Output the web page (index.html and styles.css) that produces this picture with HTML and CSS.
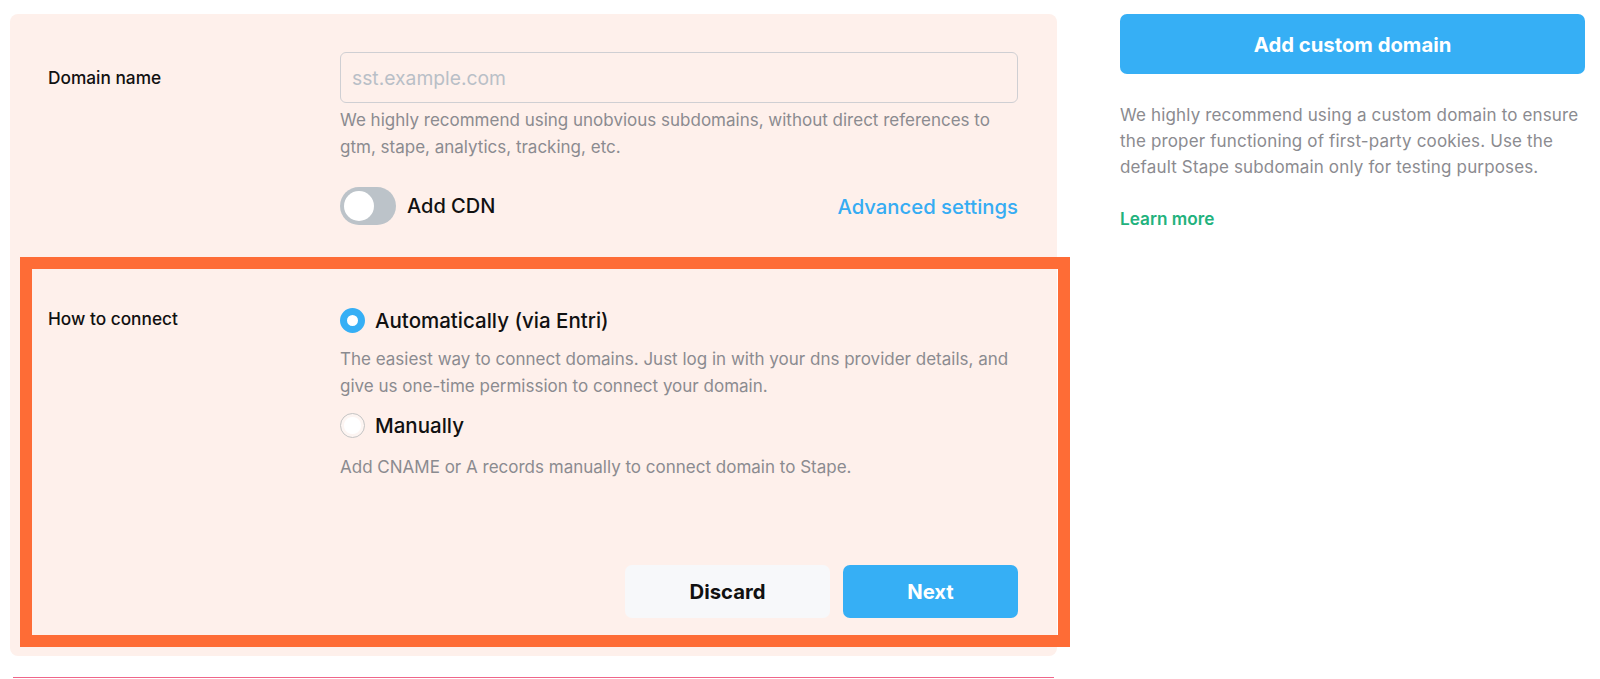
FILE: index.html
```html
<!DOCTYPE html>
<html lang="en">
<head>
<meta charset="utf-8">
<title>Add custom domain</title>
<link rel="stylesheet" href="styles.css">
</head>
<body>
<div class="page">
  <div class="main">
    <div class="card">
      <div class="row row-domain">
        <div class="label label-input">Domain name</div>
        <div class="field">
          <input class="input" type="text" placeholder="sst.example.com">
          <p class="help">We highly recommend using unobvious subdomains, without direct references to gtm, stape, analytics, tracking, etc.</p>
          <div class="cdn-row">
            <label class="toggle-wrap">
              <span class="toggle"><span class="knob"></span></span>
              <span class="toggle-label">Add CDN</span>
            </label>
            <a class="adv-link" href="#">Advanced settings</a>
          </div>
        </div>
      </div>
      <div class="row row-connect">
        <div class="label">How to connect</div>
        <div class="field">
          <div class="radio-row">
            <span class="radio checked"></span>
            <span class="radio-label">Automatically (via Entri)</span>
          </div>
          <p class="help help-radio">The easiest way to connect domains. Just log in with your dns provider details, and give us one-time permission to connect your domain.</p>
          <div class="radio-row radio-row-second">
            <span class="radio"></span>
            <span class="radio-label">Manually</span>
          </div>
          <p class="help help-radio help-last">Add CNAME or A records manually to connect domain to Stape.</p>
          <div class="actions">
            <button class="btn btn-secondary" type="button">Discard</button>
            <button class="btn btn-primary" type="button">Next</button>
          </div>
        </div>
      </div>
    </div>
    <div class="highlight"></div>
    <div class="divider"></div>
  </div>
  <aside class="side">
    <button class="btn btn-primary btn-wide" type="button">Add custom domain</button>
    <p class="side-text">We highly recommend using a custom domain to ensure the proper functioning of first-party cookies. Use the default Stape subdomain only for testing purposes.</p>
    <a class="learn" href="#">Learn more</a>
  </aside>
</div>
</body>
</html>
```

FILE: styles.css
```css
* { box-sizing: border-box; }

html, body {
  margin: 0;
  padding: 0;
  background: #ffffff;
  font-family: Inter, "Noto Sans", "Liberation Sans", sans-serif;
  color: #111111;
}

.page {
  display: flex;
  align-items: flex-start;
  padding: 14px 0 0 10px;
  height: 679px;
  overflow: hidden;
}

.main {
  position: relative;
  width: 1047px;
  flex: none;
}

.card {
  background: #fef0eb;
  border-radius: 8px;
  padding: 38px 39px 38px 38px;
}

.row {
  display: grid;
  grid-template-columns: 292px 1fr;
}

.label {
  font-size: 17.3px;
  font-weight: 500;
  color: #111;
  line-height: 20px;
}

.label-input {
  padding-top: 16px;
}

.row-connect {
  margin-top: 83px;
}

.row-connect .label {
  padding-top: 1px;
}

.input {
  display: block;
  width: 100%;
  height: 51px;
  border: 1px solid #cfcfd3;
  border-radius: 6px;
  background: transparent;
  padding: 0 11px;
  font-family: inherit;
  font-size: 19.3px;
  color: #111;
  outline: none;
}

.input::placeholder {
  color: #b9bfc7;
}

.help {
  margin: 4px 0 0 0;
  font-size: 17px;
  line-height: 27px;
  color: #8b8b90;
}

.cdn-row {
  margin-top: 26px;
  display: flex;
  align-items: center;
  justify-content: space-between;
}

.toggle-wrap {
  display: flex;
  align-items: center;
  gap: 11px;
}

.toggle {
  position: relative;
  width: 56px;
  height: 38px;
  border-radius: 19px;
  background: #bcc3c9;
  flex: none;
}

.knob {
  position: absolute;
  left: 4px;
  top: 4px;
  width: 30px;
  height: 30px;
  border-radius: 50%;
  background: #ffffff;
}

.toggle-label {
  font-size: 20px;
  font-weight: 500;
  color: #111;
}

.adv-link {
  font-size: 20.3px;
  font-weight: 500;
  color: #36acf3;
  text-decoration: none;
}

.radio-row {
  display: flex;
  align-items: center;
  gap: 10px;
  height: 25px;
}

.radio-row-second {
  margin-top: 13px;
}

.radio {
  width: 25px;
  height: 25px;
  border-radius: 50%;
  border: 1px solid #c4c4c4;
  background: radial-gradient(circle, #ffffff 0 8px, #fdf5f2 9px);
  flex: none;
}

.radio.checked {
  border: 7.5px solid #36aff5;
  background: #ffffff;
}

.radio-label {
  font-size: 20.5px;
  font-weight: 500;
  color: #111;
}

.help-radio {
  margin-top: 13px;
}

.help-last {
  margin-top: 16px;
}

.actions {
  margin-top: 84px;
  display: flex;
  justify-content: flex-end;
  gap: 13px;
}

.btn {
  height: 53px;
  border: none;
  border-radius: 7px;
  font-family: inherit;
  font-size: 20.3px;
  font-weight: 700;
  cursor: pointer;
}

.btn-secondary {
  width: 205px;
  background: #f7f8fa;
  color: #111;
}

.btn-primary {
  width: 175px;
  background: #36aff5;
  color: #ffffff;
}

.highlight {
  position: absolute;
  left: 10px;
  top: 243px;
  width: 1050px;
  height: 390px;
  border: 12px solid #fe6c36;
}

.divider {
  margin: 21px 3px 0 3px;
  height: 1px;
  background: #f0668a;
}

.side {
  margin-left: 63px;
  width: 465px;
  flex: none;
}

.btn-wide {
  display: block;
  width: 465px;
  height: 60px;
  border-radius: 7px;
  font-size: 20.3px;
}

.side-text {
  margin: 28px 0 0 0;
  font-size: 17px;
  letter-spacing: 0.15px;
  line-height: 26px;
  color: #8b8b90;
}

.learn {
  display: inline-block;
  margin-top: 28px;
  font-size: 17.2px;
  font-weight: 600;
  color: #22b27d;
  text-decoration: none;
}
```
